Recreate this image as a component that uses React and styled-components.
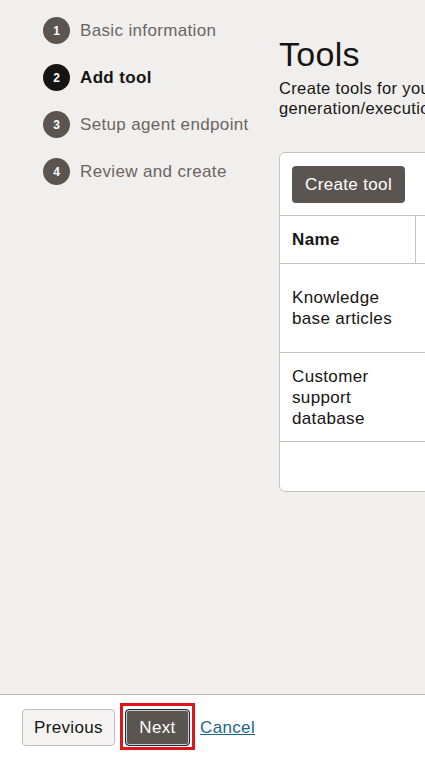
import React from "react";
import styled, { createGlobalStyle } from "styled-components";

const Global = createGlobalStyle`
  html, body { margin: 0; padding: 0; }
  body {
    background: #f1efed;
    font-family: "Liberation Sans", Arial, Helvetica, sans-serif;
    color: #161513;
    overflow: hidden;
    letter-spacing: 0.35px;
  }
  * { box-sizing: border-box; }
`;

const Page = styled.div`
  display: flex;
  flex-direction: column;
  height: 100vh;
  width: 100vw;
  overflow: hidden;
`;

const Body = styled.div`
  flex: 1;
  display: flex;
  min-height: 0;
`;

const StepNav = styled.ol`
  list-style: none;
  margin: 0;
  padding: 17px 0 0 43px;
  width: 279px;
  flex-shrink: 0;
  display: flex;
  flex-direction: column;
  gap: 20px;
`;

const Step = styled.li`
  display: flex;
  align-items: center;
  gap: 10px;
  height: 27px;
  font-size: 17px;
  white-space: nowrap;
  color: ${(p) => (p.$active ? "#161513" : "#6b6561")};
  font-weight: ${(p) => (p.$active ? 700 : 400)};
`;

const Circle = styled.span`
  width: 27px;
  height: 27px;
  border-radius: 50%;
  flex-shrink: 0;
  display: flex;
  align-items: center;
  justify-content: center;
  background: ${(p) => (p.$active ? "#161513" : "#5b5552")};
  color: #fff;
  font-size: 12px;
  font-weight: 700;
  letter-spacing: 0;
`;

const Main = styled.main`
  flex-shrink: 0;
  width: 720px;
  padding-top: 34px;
`;

const Title = styled.h1`
  margin: 0;
  font-size: 34px;
  line-height: 40px;
  font-weight: 400;
  letter-spacing: 0.3px;
  color: #161513;
`;

const Desc = styled.p`
  margin: 4px 0 0;
  font-size: 16.5px;
  line-height: 20px;
  color: #161513;
  white-space: nowrap;
`;

const Card = styled.div`
  margin-top: 34px;
  background: #fff;
  border: 1px solid #c7c2be;
  border-radius: 6px;
  width: 700px;
`;

const Toolbar = styled.div`
  padding: 13px 12px 12px;
  display: flex;
`;

const PrimaryButton = styled.button`
  position: relative;
  height: 37px;
  padding: 0 12px;
  border: 1px solid transparent;
  border-radius: 4px;
  background: #5b5552;
  color: #fff;
  font-family: inherit;
  font-size: 17px;
  letter-spacing: 0.35px;
  cursor: pointer;
`;

const Row = styled.div`
  display: flex;
  border-top: 1px solid #c7c2be;
  height: ${(p) => p.$h}px;
`;

const NameCell = styled.div`
  width: 136px;
  flex-shrink: 0;
  padding: 0 13px 0 12px;
  display: flex;
  align-items: center;
  font-size: 17px;
  line-height: 21px;
  font-weight: ${(p) => (p.$head ? 700 : 400)};
  border-right: ${(p) => (p.$head ? "1px solid #c7c2be" : "1px solid transparent")};
`;

const Cell = styled.div`
  flex: 1;
  padding: 0 13px;
  display: flex;
  align-items: center;
  font-size: 17px;
  font-weight: ${(p) => (p.$head ? 700 : 400)};
`;

const Footer = styled.footer`
  flex-shrink: 0;
  height: 63px;
  background: #fff;
  border-top: 1px solid #bdb8b3;
  display: flex;
  align-items: flex-start;
  gap: 10px;
  padding: 14px 22px 0;
`;

const SecondaryButton = styled.button`
  height: 37px;
  width: 93px;
  padding: 0;
  border: 1px solid #c2bcb7;
  border-radius: 4px;
  background: #f5f4f2;
  color: #161513;
  font-family: inherit;
  font-size: 17px;
  letter-spacing: 0.35px;
  cursor: pointer;
`;

const NextButton = styled(PrimaryButton)`
  width: 65px;
  padding: 0;
  border: 1px solid #1d2a36;
  box-shadow: inset 0 0 0 1px #c9ced2;
  outline: none;
  &::after {
    content: "";
    position: absolute;
    top: -7px;
    left: -6px;
    right: -6px;
    bottom: -5px;
    border: 3px solid #e0141c;
    pointer-events: none;
  }
`;

const CancelLink = styled.a`
  height: 37px;
  display: flex;
  align-items: center;
  color: #1c6589;
  font-size: 17px;
  text-decoration: underline;
  cursor: pointer;
`;

const steps = [
  "Basic information",
  "Add tool",
  "Setup agent endpoint",
  "Review and create",
];

export default function App() {
  return (
    <>
      <Global />
      <Page>
        <Body>
          <StepNav>
            {steps.map((s, i) => (
              <Step key={s} $active={i === 1}>
                <Circle $active={i === 1}>{i + 1}</Circle>
                {s}
              </Step>
            ))}
          </StepNav>
          <Main>
            <Title>Tools</Title>
            <Desc>
              Create tools for your agent to use, such as RAG, SQL
              <br />
              generation/execution, and custom function calling.
            </Desc>
            <Card>
              <Toolbar>
                <PrimaryButton>Create tool</PrimaryButton>
              </Toolbar>
              <Row $h={48}>
                <NameCell $head>Name</NameCell>
                <Cell $head>Type</Cell>
              </Row>
              <Row $h={89}>
                <NameCell>Knowledge base articles</NameCell>
                <Cell>RAG</Cell>
              </Row>
              <Row $h={89}>
                <NameCell>Customer support database</NameCell>
                <Cell>SQL</Cell>
              </Row>
              <Row $h={50} />
            </Card>
          </Main>
        </Body>
        <Footer>
          <SecondaryButton>Previous</SecondaryButton>
          <NextButton>Next</NextButton>
          <CancelLink>Cancel</CancelLink>
        </Footer>
      </Page>
    </>
  );
}
